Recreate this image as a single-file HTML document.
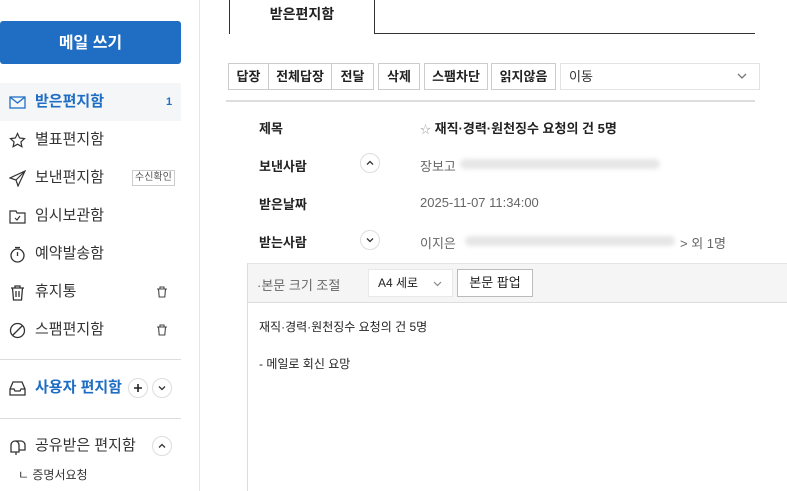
<!DOCTYPE html>
<html><head><meta charset="utf-8"><style>
*{margin:0;padding:0;box-sizing:border-box}
body{width:787px;height:491px;overflow:hidden;background:#fff;font-family:"Liberation Sans","Noto Sans CJK KR",sans-serif;color:#222;position:relative}
.a{position:absolute}
.side{left:0;top:0;width:200px;height:491px;border-right:1px solid #e5e5e5}
.compose{left:0;top:21px;width:181px;height:43px;background:#1f6ec4;border-radius:3px;color:#fff;font-size:16px;font-weight:bold;text-align:center;line-height:45px}
.row{left:0;width:181px;height:38px;font-size:15px;line-height:38px;padding-left:35px;color:#333}
.ic{position:absolute;left:9px;top:11px;width:17px;height:17px}
.btn{top:63px;height:27px;border:1px solid #ccc;background:#fff;font-size:13px;font-weight:bold;line-height:25px;text-align:center;color:#222}
.lab{left:259px;font-size:13px;font-weight:bold}
.val{left:420px;font-size:13px;color:#666}
.circ{width:20px;height:20px;border:1px solid #ddd;border-radius:50%;text-align:center}
.circ svg{position:absolute;left:5px;top:5px}
.blur{height:10px;background:#e6e6e6;border-radius:5px;filter:blur(2px)}
</style></head><body>
<div class="a side"></div>
<div class="a compose">메일 쓰기</div>
<div class="a row" style="top:83px;background:#f5f6f7;color:#1f6ec4;font-weight:bold">
<svg class="ic" viewBox="0 0 17 17" fill="none" stroke="#1f6ec4" stroke-width="1.3"><rect x="1" y="3" width="15" height="11"/><path d="M1 3l7.5 6L16 3"/></svg>받은편지함<span class="a" style="left:166px;font-size:11px">1</span></div>
<div class="a row" style="top:121px"><svg class="ic" viewBox="0 0 17 17" fill="none" stroke="#333" stroke-width="1.2"><path d="M8.5 1.5l2.1 4.5 4.9.6-3.6 3.3 1 4.8-4.4-2.5-4.4 2.5 1-4.8L1.5 6.6l4.9-.6z"/></svg>별표편지함</div>
<div class="a row" style="top:159px"><svg class="ic" viewBox="0 0 17 17" fill="none" stroke="#333" stroke-width="1.2"><path d="M16 1L1 8l6 2 2 6zM7 10l9-9"/></svg>보낸편지함<span class="a" style="left:132px;top:11px;height:16px;line-height:14px;font-size:10px;border:1px solid #ccc;padding:0 2px;color:#555">수신확인</span></div>
<div class="a row" style="top:197px"><svg class="ic" viewBox="0 0 17 17" fill="none" stroke="#333" stroke-width="1.2"><path d="M1 3h6l1 2h8v10H1z"/><path d="M6 10l2 2 3-4"/></svg>임시보관함</div>
<div class="a row" style="top:235px"><svg class="ic" viewBox="0 0 17 17" fill="none" stroke="#333" stroke-width="1.3"><circle cx="8.5" cy="9.5" r="6.5"/><path d="M8.5 6v4M6 1.5h5"/></svg>예약발송함</div>
<div class="a row" style="top:273px"><svg class="ic" viewBox="0 0 17 17" fill="none" stroke="#333" stroke-width="1.3"><path d="M2 4h13M6 4V2h5v2M3.5 4l1 12h8l1-12M7 7v6M10 7v6"/></svg>휴지통<svg class="a" style="left:156px;top:13px" width="12" height="12" viewBox="0 0 12 12" fill="none" stroke="#444" stroke-width="1.1"><path d="M1 3h10M4 3V1h4v2M2.5 3l.7 8h5.6l.7-8"/></svg></div>
<div class="a row" style="top:311px"><svg class="ic" viewBox="0 0 17 17" fill="none" stroke="#333" stroke-width="1.3"><circle cx="8.5" cy="8.5" r="7"/><path d="M3.5 13.5l10-10"/></svg>스팸편지함<svg class="a" style="left:156px;top:13px" width="12" height="12" viewBox="0 0 12 12" fill="none" stroke="#444" stroke-width="1.1"><path d="M1 3h10M4 3V1h4v2M2.5 3l.7 8h5.6l.7-8"/></svg></div>
<div class="a" style="left:0;top:359px;width:181px;height:1px;background:#ddd"></div>
<div class="a row" style="top:369px;color:#1f6ec4;font-weight:bold"><svg class="ic" viewBox="0 0 17 17" fill="none" stroke="#333" stroke-width="1.3"><path d="M1 9l3-7h9l3 7v6H1zM1 9h4l1 2h5l1-2h4"/></svg>사용자 편지함<span class="a circ" style="left:128px;top:9px"><svg width="8" height="8" viewBox="0 0 8 8" stroke="#222" stroke-width="1.6"><path d="M4 0v8M0 4h8"/></svg></span><span class="a circ" style="left:152px;top:9px"><svg width="8" height="8" viewBox="0 0 8 8" fill="none" stroke="#333" stroke-width="1.3"><path d="M1 2.5l3 3 3-3"/></svg></span></div>
<div class="a" style="left:0;top:418px;width:181px;height:1px;background:#ddd"></div>
<div class="a row" style="top:427px"><svg class="ic" viewBox="0 0 17 17" fill="none" stroke="#333" stroke-width="1.3"><path d="M5 14H2V7a4 4 0 018 0v7H5zM6 3h6a4 4 0 014 4v5h-6M7 14v3"/></svg>공유받은 편지함<span class="a circ" style="left:152px;top:9px"><svg width="8" height="8" viewBox="0 0 8 8" fill="none" stroke="#333" stroke-width="1.3"><path d="M1 5.5l3-3 3 3"/></svg></span></div>
<div class="a" style="left:18px;top:466px;font-size:12px;color:#333">ㄴ 증명서요청</div>

<div class="a" style="left:229px;top:0;width:146px;height:34px;border-left:1px solid #333;border-right:1px solid #333;font-size:14px;font-weight:bold;text-align:center;line-height:28px">받은편지함</div>
<div class="a" style="left:374px;top:33px;width:381px;height:1px;background:#333"></div>

<div class="a btn" style="left:228px;width:41px">답장</div>
<div class="a btn" style="left:268px;width:64px">전체답장</div>
<div class="a btn" style="left:331px;width:43px">전달</div>
<div class="a btn" style="left:378px;width:42px">삭제</div>
<div class="a btn" style="left:424px;width:64px">스팸차단</div>
<div class="a btn" style="left:491px;width:65px">읽지않음</div>
<div class="a" style="left:560px;top:63px;width:200px;height:27px;border:1px solid #e3e3e3;font-size:13px;line-height:25px;padding-left:8px;color:#333">이동<svg class="a" style="left:176px;top:9px" width="10" height="7" viewBox="0 0 10 7" fill="none" stroke="#777" stroke-width="1.3"><path d="M1 1l4 4 4-4"/></svg></div>
<div class="a" style="left:226px;top:100px;width:529px;height:2px;background:#ddd"></div>

<div class="a lab" style="top:118px">제목</div>
<div class="a" style="left:420px;top:118px;font-size:13px;font-weight:bold"><span style="color:#aaa;font-weight:normal;font-size:11px">☆</span> 재직·경력·원천징수 요청의 건 5명</div>
<div class="a lab" style="top:156px">보낸사람</div>
<div class="a circ" style="left:360px;top:153px"><svg width="8" height="8" viewBox="0 0 8 8" fill="none" stroke="#333" stroke-width="1.3"><path d="M1 5.5l3-3 3 3"/></svg></div>
<div class="a val" style="top:156px">장보고</div>
<div class="a blur" style="left:460px;top:159px;width:200px"></div>
<div class="a lab" style="top:194px">받은날짜</div>
<div class="a val" style="top:195px">2025-11-07 11:34:00</div>
<div class="a lab" style="top:232px">받는사람</div>
<div class="a circ" style="left:360px;top:230px"><svg width="8" height="8" viewBox="0 0 8 8" fill="none" stroke="#333" stroke-width="1.3"><path d="M1 2.5l3 3 3-3"/></svg></div>
<div class="a val" style="top:233px">이지은</div>
<div class="a blur" style="left:465px;top:236px;width:210px"></div>
<div class="a val" style="left:680px;top:233px">&gt; 외 1명</div>

<div class="a" style="left:247px;top:263px;width:540px;height:228px;border-left:1px solid #ddd;border-top:1px solid #e5e5e5"></div>
<div class="a" style="left:248px;top:264px;width:539px;height:39px;background:#f5f5f5;border-bottom:1px solid #ddd"></div>
<div class="a" style="left:257px;top:275px;font-size:13px;color:#666">·본문 크기 조절</div>
<div class="a" style="left:368px;top:269px;width:85px;height:28px;background:#fff;border:1px solid #e8e8e8;font-size:12px;line-height:26px;padding-left:9px">A4 세로<svg class="a" style="left:64px;top:11px" width="9" height="6" viewBox="0 0 9 6" fill="none" stroke="#888" stroke-width="1.2"><path d="M1 1l3.5 3.5L8 1"/></svg></div>
<div class="a" style="left:457px;top:269px;width:76px;height:28px;background:#fff;border:1px solid #bbb;font-size:13px;line-height:26px;text-align:center">본문 팝업</div>
<div class="a" style="left:259px;top:318px;font-size:12px">재직·경력·원천징수 요청의 건 5명</div>
<div class="a" style="left:259px;top:355px;font-size:12px">- 메일로 회신 요망</div>
</body></html>
